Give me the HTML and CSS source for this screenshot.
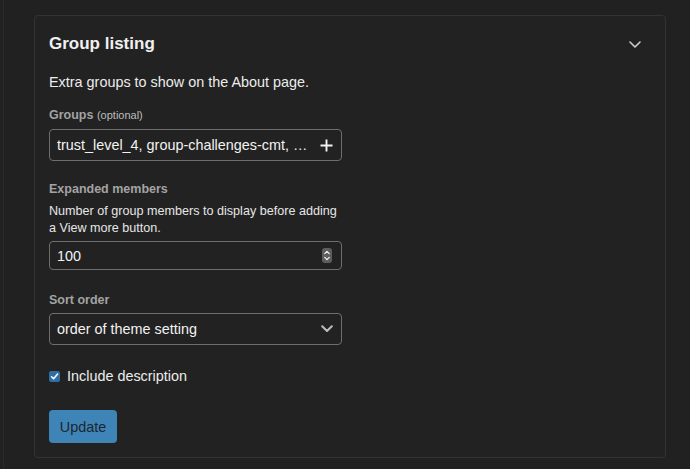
FILE: index.html
```html
<!DOCTYPE html>
<html lang="en">
<head>
<meta charset="utf-8">
<title>Group listing</title>
<link rel="stylesheet" href="styles.css">
</head>
<body>
<div class="page">
  <div class="rail"></div>
  <main class="main">
    <section class="card">
      <header class="card-header">
        <h2 class="title">Group listing</h2>
        <button class="collapse" type="button" aria-label="Collapse">
          <svg width="12" height="7" viewBox="0 0 12 7"><path d="M1 1 L6 6 L11 1" fill="none" stroke="#cfcfcf" stroke-width="1.6" stroke-linecap="round" stroke-linejoin="round"/></svg>
        </button>
      </header>
      <p class="intro">Extra groups to show on the About page.</p>

      <div class="field field-groups">
        <label class="label">Groups <span class="optional">(optional)</span></label>
        <div class="control control-tall">
          <span class="value">trust_level_4, group-challenges-cmt, …</span>
          <svg class="plus" width="13" height="13" viewBox="0 0 13 13"><path d="M6.5 0.5 V12.5 M0.5 6.5 H12.5" stroke="#f2f2f2" stroke-width="1.9"/></svg>
        </div>
      </div>

      <div class="field field-members">
        <label class="label">Expanded members</label>
        <p class="help">Number of group members to display before adding<br>a View more button.</p>
        <div class="control control-short">
          <span class="value">100</span>
          <svg class="spin" width="10" height="15" viewBox="0 0 10 15"><rect x="0" y="0" width="10" height="15" rx="3" fill="#5e5e5e"/><path d="M2.8 5.6 L5 3.4 L7.2 5.6 M2.8 9.4 L5 11.6 L7.2 9.4" fill="none" stroke="#f0f0f0" stroke-width="1.3" stroke-linecap="round" stroke-linejoin="round"/></svg>
        </div>
      </div>

      <div class="field field-sort">
        <label class="label">Sort order</label>
        <div class="control control-tall">
          <span class="value">order of theme setting</span>
          <svg class="caret" width="12" height="8" viewBox="0 0 12 8"><path d="M1.2 1.2 L6 6 L10.8 1.2" fill="none" stroke="#bdbdbd" stroke-width="2" stroke-linecap="round" stroke-linejoin="round"/></svg>
        </div>
      </div>

      <label class="check-row">
        <span class="checkbox">
          <svg width="11" height="11" viewBox="0 0 11 11"><rect x="0" y="0" width="11" height="11" rx="2" fill="#2f6ea3"/><path d="M2.6 5.8 L4.6 7.8 L8.6 3" fill="none" stroke="#ffffff" stroke-width="1.6" stroke-linecap="round" stroke-linejoin="round"/></svg>
        </span>
        <span class="check-text">Include description</span>
      </label>

      <button class="update" type="button">Update</button>
    </section>
  </main>
</div>
</body>
</html>
```

FILE: styles.css
```css
* { box-sizing: border-box; }

html, body {
  margin: 0;
  padding: 0;
  background: #212121;
  height: 100%;
}

body {
  font-family: "Liberation Sans", Arial, Helvetica, sans-serif;
  color: #e6e6e6;
  overflow: hidden;
}

.page {
  display: flex;
  min-height: 100vh;
}

.rail {
  width: 4px;
  border-right: 1px solid #2b2b2b;
  flex: none;
}

.main {
  padding: 15px 0 0 30px;
  flex: none;
}

.card {
  width: 632px;
  height: 443px;
  border: 1px solid #333333;
  border-radius: 4px;
  background: #222222;
  padding: 18px 14px 0 14px;
  display: flex;
  flex-direction: column;
  align-items: flex-start;
}

.card-header {
  align-self: stretch;
  display: flex;
  align-items: center;
  justify-content: space-between;
  height: 20px;
}

.title {
  margin: 0;
  font-size: 17px;
  line-height: 20px;
  font-weight: 700;
  color: #f0f0f0;
}

.collapse {
  background: none;
  border: 0;
  padding: 0;
  margin-right: 10px;
  display: flex;
  align-items: center;
  height: 20px;
  cursor: pointer;
}

.intro {
  margin: 18px 0 0;
  font-size: 14.4px;
  line-height: 20px;
  color: #ececec;
}

.field {
  display: flex;
  flex-direction: column;
  align-items: flex-start;
}

.field-groups { margin-top: 15px; }
.field-members { margin-top: 20px; }
.field-sort { margin-top: 22px; }

.label {
  font-size: 12.5px;
  line-height: 16px;
  font-weight: 700;
  color: #a3a3a3;
}

.optional {
  font-size: 11px;
  font-weight: 400;
  color: #bdbdbd;
}

.help {
  margin: 6px 0 0;
  font-size: 12.6px;
  line-height: 17px;
  color: #e6e6e6;
}

.control {
  width: 293px;
  border: 1px solid #6e6e6e;
  border-radius: 4px;
  background: #222222;
  display: flex;
  align-items: center;
  justify-content: space-between;
  padding: 0 8px 0 7px;
  font-size: 14.4px;
  color: #f2f2f2;
}

.control-tall { height: 32px; margin-top: 6px; }
.control-short { height: 29px; margin-top: 4px; padding-right: 9px; }

.field-sort .control-tall { margin-top: 5px; }

.value {
  white-space: nowrap;
}

.check-row {
  margin-top: 21px;
  display: flex;
  align-items: center;
  height: 20px;
  cursor: pointer;
}

.checkbox {
  display: flex;
  margin-right: 7px;
}

.check-text {
  font-size: 14.4px;
  color: #ececec;
}

.update {
  margin-top: 24px;
  width: 68px;
  height: 33px;
  border: 0;
  border-radius: 4px;
  background: #3e84b6;
  color: #1d2630;
  font-family: "Liberation Sans", Arial, Helvetica, sans-serif;
  font-size: 14.4px;
  padding: 0;
  cursor: pointer;
}
```
